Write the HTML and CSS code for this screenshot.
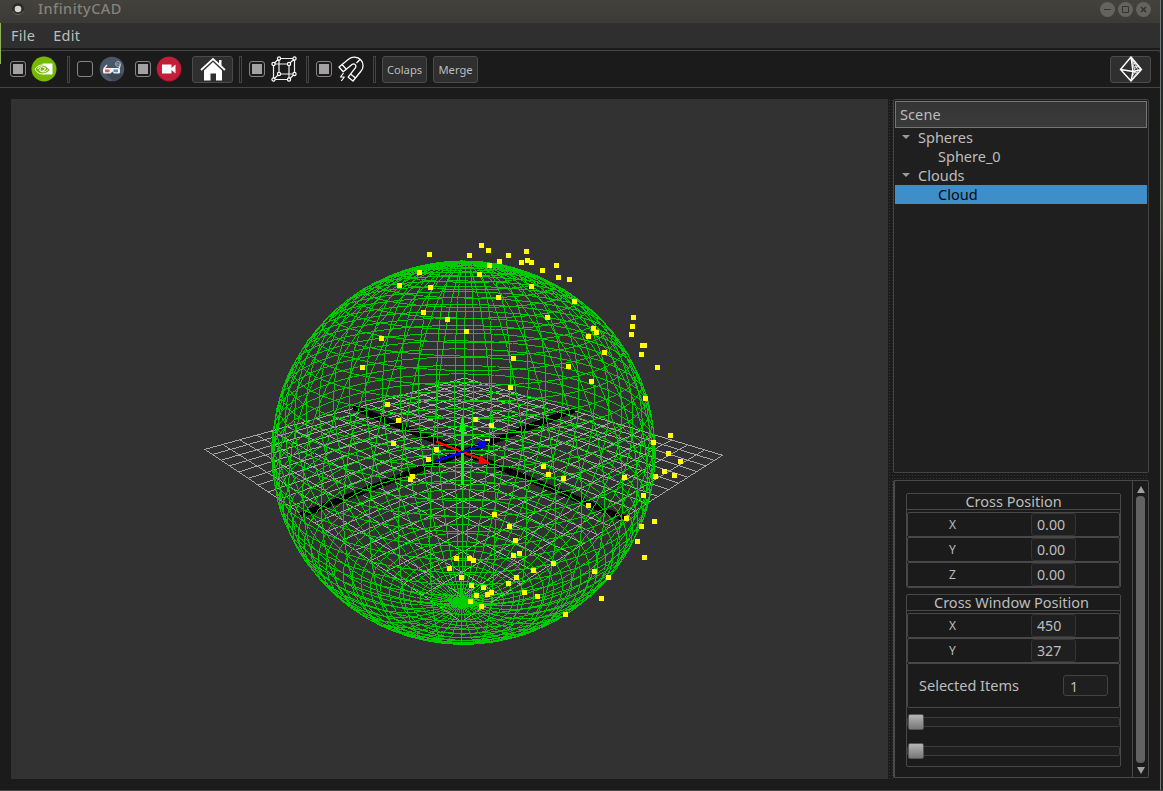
FILE: index.html
```html
<!DOCTYPE html>
<html lang="en">
<head>
<meta charset="utf-8">
<title>InfinityCAD</title>
<link rel="stylesheet" href="styles.css">
</head>
<body>
<div class="window">
  <header class="titlebar">
    <svg class="app-dot" width="16" height="18" viewBox="0 0 16 18"><circle cx="8" cy="9" r="6" fill="#2b2b29"/><path d="M2.500 11a6 6 0 0 0 11 0" fill="none" stroke="#67655f"/><circle cx="8" cy="9" r="3.300" fill="#d8d5ce"/></svg>
    <span class="title">InfinityCAD</span>
    <svg class="win-buttons" width="54" height="18" viewBox="0 0 54 18"><g fill="#65635d"><circle cx="8.500" cy="9.500" r="7.500"/><circle cx="26.500" cy="9.500" r="7.500"/><circle cx="44.500" cy="9.500" r="7.500"/></g><g fill="none" stroke="#34332f"><path d="M5 9.500h7"/><path d="M23.500 6.500h6v6h-6z"/><path d="M42 7l5 5M47 7l-5 5" stroke-width="1.600"/></g></svg>
  </header>
  <nav class="menubar"><span>File</span><span>Edit</span></nav>
  <div class="toolbar">
    <i class="check on"></i>
    <svg class="ic nvidia" width="26" height="26" viewBox="0 0 26 26"><circle cx="13" cy="13" r="12.500" fill="#76b900"/><path d="M11.500 7.500H21.500v11H11.500z" fill="#fff"/><path d="M4 13c3-4 8-5.500 12-2 1.500 1.300 2.500 2.200 3 3-3 3.500-7 4.500-10 3.500C6.500 16.800 5 15 4 13z" fill="#76b900" stroke="#fff" stroke-width="1"/><path d="M6.500 13c2-2.600 5-3.300 8-.5-1.500 2.500-3.500 3.300-5 2.500-1-.5-1-2 .5-2.500" fill="none" stroke="#fff" stroke-width="1.100"/><path d="M10 15.500c3 1 5 0 7-2" fill="none" stroke="#fff"/></svg>
    <i class="sep s1"></i>
    <i class="check c2"></i>
    <svg class="ic glasses" width="26" height="26" viewBox="0 0 26 26"><circle cx="13" cy="13" r="12.300" fill="#4a5766"/><path d="M20 17l4 1a12 12 0 0 1-10 7L6 17z" fill="#3b4654"/><path d="M5 12.500l3-3.500M20 12.500l1.500-4.500" stroke="#e8edf2" stroke-width="1.300"/><path d="M5.500 12h14q1.500 0 1.500 1.500v2.500q0 1.500-1.500 1.500h-4.500l-1.700-2-1.700 2H5.500Q4 17.500 4 16v-2.500Q4 12 5.500 12z" fill="#f0f2f4"/><path d="M6 13.500h4.500v2.700H6z" fill="#f05540"/><path d="M14.500 13.500H19v2.700h-4.500z" fill="#4a90e2"/><circle cx="19" cy="8" r="2.500" fill="none" stroke="#a4adb8"/><path d="M17.500 8h3" stroke="#a4adb8"/></svg>
    <i class="check on c3"></i>
    <svg class="ic camera" width="26" height="26" viewBox="0 0 26 26"><circle cx="13" cy="13" r="12.400" fill="#b4182f"/><circle cx="13" cy="12.500" r="11.500" fill="#c41e3a"/><path d="M6 8.500h9.500v9H6zM15.500 12l4-3.500v9l-4-3.500z" fill="#fff"/></svg>
    <span class="btn home"><svg width="26" height="24" viewBox="0 0 26 24"><path d="M1 13L13 2l12 11" fill="none" stroke="#fff" stroke-width="1.700"/><path d="M4 13.500L13 5l9 8.500V23.500h-6v-7h-5.500v7H4zM19 3h2.500v6L19 7z" fill="#fff"/></svg></span>
    <i class="sep s2"></i>
    <i class="check on c4"></i>
    <svg class="ic cube" width="26" height="26" viewBox="0 0 26 26" fill="none" stroke="#eee"><g stroke-width="1.200"><path d="M2.500 8H18v15.500H2.500zM8 2.500h15.500v15.500H8zM2.500 8L8 2.500M18 8l5.500-5.500M18 23.500l5.500-5.500M2.500 23.500L8 18"/></g><g fill="#1b1b1b" stroke="#fff" stroke-width="1.200"><circle cx="2.500" cy="8" r="1.600"/><circle cx="18" cy="8" r="1.600"/><circle cx="8" cy="2.500" r="1.600"/><circle cx="23.500" cy="2.500" r="1.600"/><circle cx="2.500" cy="23.500" r="1.600"/><circle cx="18" cy="23.500" r="1.600"/><circle cx="8" cy="18" r="1.600"/><circle cx="23.500" cy="18" r="1.600"/></g></svg>
    <i class="sep s3"></i>
    <i class="check on c5"></i>
    <svg class="ic magnet" width="26" height="26" viewBox="0 0 26 26" fill="none" stroke="#fff" stroke-width="1.300" stroke-linejoin="round"><path d="M1 11L10.500 3.200C14 .3 19.500.4 22.700 3.800c3.200 3.300 3.100 8.500 0 11.700L15 25l-4.800-3.800 7.300-9.500c1.500-2-.9-5-3.500-3.200L5.200 15.800z"/><path d="M4 8.500l4.500 5M12.500 18l5 4M18.500 7l3.500-3.500"/><path d="M5.500 17l-3 4h3.800l-3 4" stroke-width="1.200"/></svg>
    <i class="sep s4"></i>
    <span class="btn colaps">Colaps</span>
    <span class="btn merge">Merge</span>
    <span class="btn shape"><svg width="24" height="26" viewBox="0 0 24 26" fill="none" stroke="#fff"><path d="M12 1L1.500 13.500 12 25l10.500-11.500zM1.500 13.500L14 15.500 22.500 13.500M12 1l2 14.500L12 25" stroke-width="1.400"/><path d="M12 1l4 13.500M12 1l7 13M14 8l3-1M14 11l6-1M13.500 20l3-5M13 23l7-9M14 16l5 1M13 4l8 9M15 13l5-3" stroke-width=".7"/></svg></span>
  </div>
  <main class="work">
    <canvas class="view" id="view" width="877" height="680"></canvas>
    <div class="vsplit"></div>
    <aside class="side">
      <section class="tree">
        <div class="tree-head">Scene</div>
        <div class="node"><i class="arrow"></i>Spheres</div>
        <div class="node leaf">Sphere_0</div>
        <div class="node"><i class="arrow"></i>Clouds</div>
        <div class="node leaf selected">Cloud</div>
      </section>
      <div class="hsplit"></div>
      <section class="props">
        <div class="props-body">
          <div class="group">
            <h2>Cross Position</h2>
            <div class="row"><label>X</label><span class="field">0.00</span></div>
            <div class="row"><label>Y</label><span class="field">0.00</span></div>
            <div class="row"><label>Z</label><span class="field">0.00</span></div>
          </div>
          <div class="group second">
            <h2 class="long">Cross Window Position</h2>
            <div class="row"><label>X</label><span class="field">450</span></div>
            <div class="row"><label>Y</label><span class="field">327</span></div>
            <div class="selected-items"><span>Selected Items</span><span class="field">1</span></div>
            <div class="slider"><i></i></div>
            <div class="slider"><i></i></div>
          </div>
        </div>
        <div class="scroll"><i class="up"></i><i class="thumb"></i><i class="down"></i></div>
      </section>
    </aside>
  </main>
</div>
<script src="scene.js"></script>
</body>
</html>
```

FILE: styles.css
```css
* { box-sizing: border-box; }
body { margin: 0; background: #1b1b1b; color: #bdbdbd; font: 14.5px "Noto Sans", "Open Sans", sans-serif; }
.window { width: 1163px; height: 791px; display: flex; flex-direction: column; overflow: hidden; position: relative; border-bottom: 1px solid #444; }
.window::before { content: ""; position: absolute; left: 0; top: 23px; width: 1px; height: 41px; background: #8fb458; }
.window::after { content: ""; position: absolute; right: 0; top: 0; width: 2px; height: 791px; border-left: 1px solid #77756f; background: linear-gradient(#1d3138 0, #1c2a2c 90px, #33452c 200px, #202b22 300px, #1d2925); }
.titlebar { height: 23px; flex: none; display: flex; align-items: flex-start; padding-left: 10px; background: linear-gradient(#43423d, #3b3a36); }
.app-dot { flex: none; }
.title { margin-left: 12px; line-height: 17px; font-size: 14.5px; font-weight: 500; color: #85827b; letter-spacing: .45px; }
.win-buttons { margin-left: auto; margin-right: 10px; }
.menubar { height: 25px; flex: none; display: flex; gap: 18px; padding-left: 11px; line-height: 25px; background: #2f2f2f; letter-spacing: .25px; }
.toolbar { height: 38px; flex: none; margin: 2px 2px 0 0; border: 1px solid #454545; border-left: 0; border-radius: 0 3px 0 0; display: flex; align-items: center; padding: 0 9px 0 10px; }
.check { flex: none; width: 16px; height: 16px; margin-top: -1px; border: 1px solid #858585; border-radius: 3px; background: #1b1b1b; }
.check.on { background: #a3a1a1; background-clip: content-box; padding: 2px; }
.ic { flex: none; margin-top: -1px; }
.nvidia { margin-left: 5px; }
.sep { flex: none; width: 3px; height: 27px; border: 1px solid #444; }
.s1 { margin-left: 10px; }
.c2 { margin-left: 7px; }
.glasses { margin-left: 6px; }
.c3 { margin-left: 10px; }
.camera { margin-left: 5px; }
.btn { flex: none; height: 27px; border: 1px solid #4b4b4b; border-radius: 3px; background: #2f2f2f; display: flex; align-items: center; justify-content: center; font-size: 11.2px; }
.home { width: 41px; margin-left: 10px; }
.s2 { margin-left: 6px; }
.c4 { margin-left: 7px; }
.cube { margin-left: 6px; }
.s3 { margin-left: 9px; }
.c5 { margin-left: 7px; }
.magnet { margin-left: 6px; }
.s4 { margin-left: 9px; }
.colaps { width: 45px; margin-left: 6px; }
.merge { width: 45px; margin-left: 6px; }
.shape { width: 41px; margin-left: auto; }
.work { flex: 1; display: flex; padding: 11px 14px 11px 11px; min-height: 0; }
.view { flex: none; width: 877px; height: 680px; background: #323232; }
.vsplit { flex: none; width: 5px; background: radial-gradient(circle, #343434 .7px, transparent 1px) 0 0 / 3px 3px; }
.side { flex: none; width: 256px; display: flex; flex-direction: column; }
.tree { height: 374px; border: 1px solid #434343; border-radius: 2px; padding: 1px; background: #1f1f1f; }
.tree-head { height: 27px; border: 1px solid #757575; background: linear-gradient(#343434, #3b3b3b); padding-left: 4px; line-height: 24px; letter-spacing: .1px; }
.node { height: 19px; line-height: 19px; display: flex; align-items: center; padding-left: 7px; }
.arrow { width: 0; height: 0; border: 4px solid transparent; border-top-color: #9a9a9a; border-bottom: 0; margin: -1px 8px 0 0; }
.node.leaf { padding-left: 43px; line-height: 18px; padding-bottom: 1px; }
.node:not(.leaf) { line-height: 18px; padding-bottom: 1px; }
.node.selected { background: #3d8ec9; color: #0a0a0a; }
.hsplit { height: 7px; background: radial-gradient(circle, #343434 .7px, transparent 1px) 0 1px / 3px 3px; }
.props { height: 298px; border: 1px solid #4a4a4a; border-width: 1px 1px 1px 2px; border-radius: 2px; display: flex; }
.props-body { flex: none; width: 237px; padding: 12px 0 0 11px; }
.group { width: 215px; border: 1px solid #484848; border-radius: 2px; }
.group h2 { margin: 0 0 2px; height: 16px; line-height: 14px; font-size: 14.5px; font-weight: 400; text-align: center; border-bottom: 1px solid #484848; }
.group h2.long { padding-right: 4px; }
.row { height: 25px; border: 1px solid #484848; border-radius: 2px; display: grid; grid-template-columns: 123px 45px; align-items: center; }
.row label { text-align: center; font-size: 12px; padding-right: 34px; }
.field { height: 23px; border: 1px solid #353535; border-radius: 3px; background: #1f1f1f; padding-left: 5px; line-height: 21px; font-size: 14.2px; }
.second { margin-top: 6px; height: 173px; }
.selected-items { height: 45px; border: 1px solid #484848; border-radius: 2px; display: flex; align-items: center; justify-content: space-between; padding: 0 11px; }
.selected-items span:first-child { margin-top: -2px; }
.selected-items .field { width: 45px; height: 21px; border-color: #424242; line-height: 21px; padding-left: 6px; }
.slider { height: 10px; margin: 9px 0 19px; border: 1px solid #3c3c3c; border-radius: 2px; background: #1f1f1f; display: flex; align-items: center; }
.slider i { flex: none; width: 16px; height: 16px; border: 1px solid #555; border-radius: 2px; background: linear-gradient(#b5b5b5, #777); }
.scroll { flex: none; width: 16px; border-left: 1px solid #484848; display: flex; flex-direction: column; align-items: center; }
.up, .down { width: 0; height: 0; border: 4px solid transparent; }
.up { border-bottom: 7px solid #a0a0a0; border-top: 0; margin-top: 5px; }
.thumb { width: 9px; height: 267px; margin: 3px 0 4px; border-radius: 4px; background: #626262; }
.down { border-top: 7px solid #a0a0a0; border-bottom: 0; }
```

FILE: scene.js
```js
const canvas = document.getElementById('view');
const ctx = canvas.getContext('2d');
ctx.fillStyle = '#323232';
ctx.fillRect(0, 0, 877, 680);
// Scene coordinates are in window pixels
ctx.translate(-11, -99);

const CX = 463.4, CY = 452.7, DIST = 3.322, FOCAL = 607.5;
const ELEV = Math.asin(0.399), ROLL = 0.0118;
const SE = Math.sin(ELEV), CE = Math.cos(ELEV);

// right: screen-right axis, near: toward the camera on the ground plane, up: height
function project(right, near, up) {
  const depth = DIST - near * CE - up * SE;
  const sx = FOCAL * right / depth;
  const sy = FOCAL * (near * SE - up * CE) / depth;
  return [CX + sx * Math.cos(ROLL) - sy * Math.sin(ROLL),
          CY + sy * Math.cos(ROLL) + sx * Math.sin(ROLL)];
}

// Aliased line with a square brush
function line(a, b, color, size = 1) {
  ctx.fillStyle = color;
  const dx = b[0] - a[0], dy = b[1] - a[1];
  const n = Math.max(1, Math.round(Math.max(Math.abs(dx), Math.abs(dy))));
  const o = (size - 1) / 2;
  for (let i = 0; i <= n; i++) {
    ctx.fillRect(Math.floor(a[0] + dx * i / n - o), Math.floor(a[1] + dy * i / n - o), size, size);
  }
}

const ground = (x, z) => {
  const p = project((x - z) * Math.SQRT1_2, (x + z) * Math.SQRT1_2, 0);
  return [p[0] + 0.2, p[1] - 0.5];
};
for (let i = -10; i <= 10; i++) {
  line(ground(i / 10, -1), ground(i / 10, 1), '#a6a6a6');
  line(ground(-1, i / 10), ground(1, i / 10), '#a6a6a6');
}
line(ground(-1, 0), ground(1, 0), '#000', 5);
line(ground(0, -1), ground(0, 1), '#000', 5);

const N = 49;
const vertex = (i, j) => {
  const lat = -Math.PI / 2 + j * Math.PI / N, lon = i * 2 * Math.PI / N;
  return project(Math.cos(lat) * Math.sin(lon), Math.cos(lat) * Math.cos(lon), Math.sin(lat));
};
for (let i = 0; i < N; i++) {
  for (let j = 0; j < N; j++) {
    line(vertex(i, j), vertex(i, j + 1), '#00cc00');
    line(vertex(i, j), vertex(i + 1, j), '#00cc00');
  }
}

function cone(points, color) {
  ctx.fillStyle = color;
  ctx.beginPath();
  points.forEach(p => ctx.lineTo(p[0], p[1]));
  ctx.fill();
}
line([462, 483], [462, 420], '#00ff00', 3);
cone([[462.5, 415], [466, 431], [459, 431]], '#00ff00');
line([437, 442], [481, 459], '#ff0000', 2);
cone([[480, 455], [491, 464], [478, 464]], '#ff0000');
line([436, 461], [480, 446], '#0000ff', 2);
cone([[487, 440], [478, 442], [480, 449], [486, 446]], '#0000ff');

const cloud = [
  429,254, 419,272, 399,285, 430,287, 423,312, 447,319, 381,338, 362,367, 387,404, 398,420,
  469,255, 481,245, 488,250, 489,265, 499,261, 508,255, 479,274, 498,297, 466,331, 526,251,
  521,262, 527,260, 531,262, 542,270, 556,265, 558,277, 569,279, 531,286, 547,317, 574,301,
  588,336, 593,328, 596,332, 604,352, 568,366, 513,358, 510,387, 591,381, 475,419, 491,425,
  633,317, 632,326, 631,334, 642,345, 644,345, 641,354, 657,367, 645,398, 393,443, 436,449,
  428,459, 412,476, 410,479, 543,466, 548,474, 563,478, 588,505, 624,477, 653,442,
  670,435, 668,453, 680,461, 664,471, 674,475, 655,476, 643,495, 626,518, 654,521, 641,526,
  494,514, 509,526, 456,558, 449,568, 515,540, 513,555, 519,553, 469,558, 473,560, 461,577,
  471,585, 483,587, 476,595, 470,601, 481,606, 487,594, 491,592, 508,583, 516,577, 524,592,
  537,596, 533,570, 553,563, 565,614, 594,571, 608,577, 601,598, 637,541, 644,557
];
ctx.fillStyle = '#ffff00';
for (let i = 0; i < cloud.length; i += 2) ctx.fillRect(cloud[i] - 2, cloud[i + 1] - 2, 5, 5);
ctx.fillRect(485, 439, 5, 2);
```
